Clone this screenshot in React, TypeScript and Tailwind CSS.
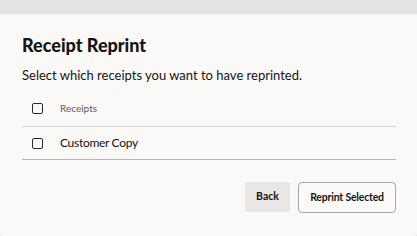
export default function App() {
  return (
    <div
      className="flex h-[236px] w-[417px] flex-col overflow-hidden bg-[#e6e5e3]"
      style={{ fontFamily: 'Lato, "Liberation Sans", sans-serif' }}
    >
      <div className="h-[14px] shrink-0 bg-[#e4e3e1]" />
      <div className="flex flex-1 flex-col rounded-b-[3px] bg-[#faf9f8] pl-[22px] pr-[21px] pt-[19px] text-[#161513]">
        <h1 className="text-[18px] leading-[24px] font-black">Receipt Reprint</h1>
        <p className="mt-[8px] text-[13px] leading-[20px]">
          Select which receipts you want to have reprinted.
        </p>

        <div className="mt-[6px] flex h-[36px] items-center border-b border-[#d9d8d6] pl-[10px]">
          <span className="h-[11px] w-[11px] rounded-[2px] border-[1.5px] border-[#2b2a28]" />
          <span className="ml-[17px] text-[10px] text-[#5f5c59]">Receipts</span>
        </div>
        <div className="flex h-[33px] items-center border-b border-[#b9b7b4] pl-[10px]">
          <span className="h-[11px] w-[11px] rounded-[2px] border-[1.5px] border-[#2b2a28]" />
          <span className="ml-[17px] text-[12px] tracking-[-0.3px]">Customer Copy</span>
        </div>

        <div className="mt-[22px] flex justify-end gap-[8px]">
          <button
            type="button"
            className="h-[30px] w-[45px] rounded-[3px] bg-[#e9e7e5] text-[10.5px] font-bold text-[#161513]"
          >
            Back
          </button>
          <button
            type="button"
            className="h-[31px] w-[98px] rounded-[4px] border border-[#a9a7a4] bg-[#fbfaf9] text-[10.5px] font-bold tracking-[-0.2px] text-[#161513]"
          >
            Reprint Selected
          </button>
        </div>
      </div>
    </div>
  );
}
